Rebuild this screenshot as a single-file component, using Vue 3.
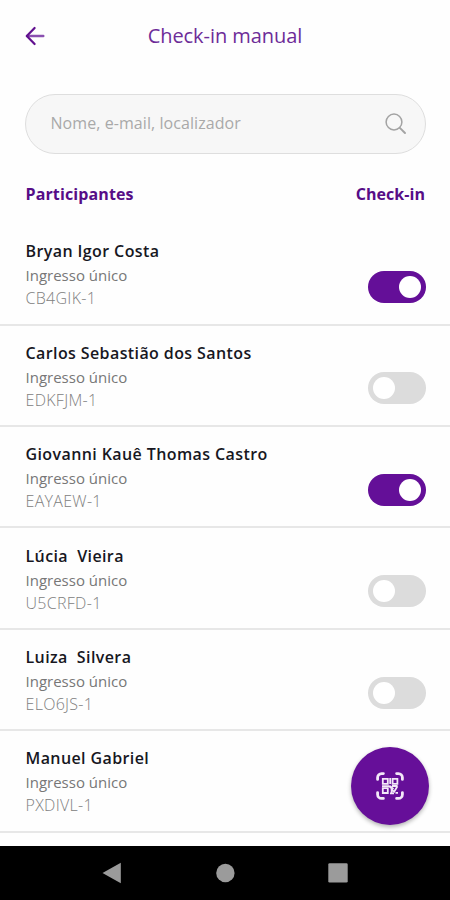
<script setup>
const participants = [
  { name: 'Bryan Igor Costa', code: 'CB4GIK-1', checked: true },
  { name: 'Carlos Sebastião dos Santos', code: 'EDKFJM-1', checked: false },
  { name: 'Giovanni Kauê Thomas Castro', code: 'EAYAEW-1', checked: true },
  { name: 'Lúcia  Vieira', code: 'U5CRFD-1', checked: false },
  { name: 'Luiza  Silvera', code: 'ELO6JS-1', checked: false },
  { name: 'Manuel Gabriel', code: 'PXDIVL-1', checked: null },
]
</script>

<template>
  <div class="screen">
    <header class="topbar">
      <svg class="back" viewBox="0 0 20 20" fill="none" stroke-linecap="round" stroke-linejoin="round">
        <path d="M18.3 10H2" stroke="#8a4fb0" stroke-width="2.4" />
        <path d="M9.6 2L1.8 10l7.8 8" stroke="#61108f" stroke-width="2.2" />
      </svg>
      <h1 class="title">Check-in manual</h1>
      <span class="spacer"></span>
    </header>

    <div class="search">
      <span class="placeholder">Nome, e-mail, localizador</span>
      <svg class="lens" viewBox="0 0 22 22" fill="none" stroke="#a3a3a3" stroke-width="1.5" stroke-linecap="round">
        <circle cx="9" cy="9" r="7.9" />
        <path stroke-width="1.9" d="M14.8 14.8l5.2 5.2" />
      </svg>
    </div>

    <div class="columns">
      <span class="col-people">Participantes</span>
      <span class="col-check">Check-in</span>
    </div>

    <main class="list">
      <section v-for="p in participants" :key="p.code" class="row">
        <div class="info">
          <div class="name">{{ p.name }}</div>
          <div class="ticket">Ingresso único</div>
          <div class="code">{{ p.code }}</div>
        </div>
        <div v-if="p.checked !== null" class="toggle" :class="{ on: p.checked }">
          <span class="knob"></span>
        </div>
      </section>
    </main>

    <button class="fab" type="button">
      <svg class="qr" viewBox="0 0 28 28" fill="none" stroke="#f3e8f8">
        <path stroke-width="2.8" stroke-linecap="round" d="M1.6 7.4V5.6a4 4 0 0 1 4-4H7.4M20.6 1.6h1.8a4 4 0 0 1 4 4V7.4M26.4 20.6v1.8a4 4 0 0 1-4 4H20.6M7.4 26.4H5.6a4 4 0 0 1-4-4V20.6" />
        <path stroke-width="1.8" d="M6.8 6.8h5v5h-5zM16.6 6.8h4.8v5h-4.8zM6.8 16.2h5V21h-5zM14.2 6v6M6 14.1h7l3.5 3M14 13.8l3.5 3.4M15.6 21.6v-4l2.6 2 3.2-5.4M14 21.3h4M19.5 20.8h2.5M16 14h5.6" />
      </svg>
    </button>

    <nav class="navbar">
      <svg class="nav-icon" viewBox="0 0 20 22" fill="#9b9b9b"><path d="M.5 11L18.8.8v20.4z" /></svg>
      <svg class="nav-icon" viewBox="0 0 20 22" fill="#9b9b9b"><circle cx="10.4" cy="11" r="9.2" /></svg>
      <svg class="nav-icon" viewBox="0 0 20 22" fill="#9b9b9b"><rect x=".3" y="1.2" width="19.4" height="19.4" rx="1.3" /></svg>
    </nav>
  </div>
</template>

<style>
body {
  margin: 0;
  background: #fff;
}
</style>

<style scoped>
.screen {
  position: relative;
  display: flex;
  flex-direction: column;
  width: 450px;
  height: 900px;
  overflow: hidden;
  background: #fefefe;
  font-family: "Open Sans", "Noto Sans", sans-serif;
}
.topbar {
  display: flex;
  align-items: center;
  justify-content: space-between;
  height: 72px;
  padding: 0 25px;
}
.back,
.spacer {
  width: 20px;
  height: 20px;
}
.title {
  margin: 0;
  font-size: 20px;
  font-weight: 400;
  line-height: 28px;
  letter-spacing: -0.05px;
  color: #6d2c98;
}
.search {
  box-sizing: border-box;
  display: flex;
  align-items: center;
  justify-content: space-between;
  height: 60px;
  margin: 22px 24px 0 25px;
  padding: 0 18px 0 24.5px;
  border: 1px solid #dedede;
  border-radius: 30px;
  background: #f7f7f7;
}
.placeholder {
  padding-bottom: 2px;
  font-size: 16px;
  letter-spacing: 0.07px;
  color: #a9a9a9;
}
.lens {
  width: 22px;
  height: 22px;
}
.columns {
  display: flex;
  justify-content: space-between;
  height: 41px;
  padding: 28px 25px 0 25.5px;
  font-size: 16px;
  font-weight: 700;
  line-height: 24px;
  color: #560d87;
}
.col-people {
  letter-spacing: 0.12px;
}
.col-check {
  letter-spacing: 0.05px;
}
.list {
  padding-top: 1.2px;
}
.row {
  box-sizing: border-box;
  display: flex;
  justify-content: space-between;
  height: 101.4px;
  padding: 15.2px 24.5px 0 25.5px;
  border-bottom: 2px solid #e7e7e7;
}
.name {
  font-size: 16px;
  font-weight: 600;
  line-height: 24px;
  letter-spacing: 0.4px;
  white-space: pre;
  color: #17171f;
}
.ticket {
  font-size: 15px;
  line-height: 24px;
  color: #777;
}
.code {
  font-size: 16px;
  font-weight: 300;
  line-height: 23px;
  letter-spacing: 0.3px;
  color: #808080;
}
.toggle {
  box-sizing: border-box;
  display: flex;
  width: 58px;
  height: 32px;
  margin-top: 31.6px;
  padding: 5px;
  border-radius: 16px;
  background: #dcdcdc;
}
.toggle.on {
  justify-content: flex-end;
  background: #640f98;
}
.knob {
  width: 22px;
  height: 22px;
  border-radius: 50%;
  background: #fff;
}
.fab {
  position: absolute;
  right: 21px;
  bottom: 75px;
  display: flex;
  align-items: center;
  justify-content: center;
  width: 78px;
  height: 78px;
  padding: 0;
  border: 0;
  border-radius: 50%;
  background: #660f99;
  box-shadow: 0 2px 4px rgba(0, 0, 0, 0.3);
}
.qr {
  width: 28px;
  height: 28px;
}
.navbar {
  box-sizing: border-box;
  display: flex;
  align-items: center;
  justify-content: space-between;
  height: 54px;
  margin-top: auto;
  padding: 0 102px;
  background: #000;
}
.nav-icon {
  width: 20px;
  height: 22px;
}
</style>
